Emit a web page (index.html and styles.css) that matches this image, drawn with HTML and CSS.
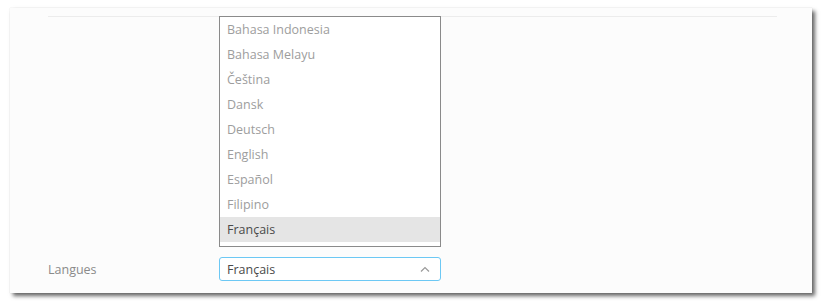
FILE: index.html
```html
<!DOCTYPE html>
<html lang="fr">
<head>
  <meta charset="UTF-8" />
  <title>Langues</title>
  <link rel="stylesheet" href="styles.css">
</head>
<body>

  <div class="card">
    <hr class="rule">

    <div class="row">
      <label class="label">Langues</label>

      <div class="select-wrap">
        <!-- open list, drawn above the field -->
        <ul class="options">
          <li>Bahasa Indonesia</li>
          <li>Bahasa Melayu</li>
          <li>Čeština</li>
          <li>Dansk</li>
          <li>Deutsch</li>
          <li>English</li>
          <li>Español</li>
          <li>Filipino</li>
          <li class="selected">Français</li>
        </ul>

        <div class="select">
          <span>Français</span>
          <svg class="chevron" width="10" height="6" viewBox="0 0 10 6">
            <path d="M1 5.5 L5 1.5 L9 5.5" fill="none" stroke="#9a9a9a" stroke-width="1.2"/>
          </svg>
        </div>
      </div>
    </div>
  </div>

</body>
</html>
```

FILE: styles.css
```css
* { margin: 0; padding: 0; box-sizing: border-box; }

html, body {
  background: #fff;
  font-family: 'Open Sans', sans-serif;
  font-size: 12.5px;
}

body {
  padding: 8px 10px;
}

.card {
  width: 802px;
  height: 285px;
  background: #fcfcfc;
  box-shadow: 0 0 1px rgba(0, 0, 0, 0.15), 3px 3px 4px rgba(0, 0, 0, 0.6);
  padding: 8px 35px 12px 38px;
  display: flex;
  flex-direction: column;
}

.rule {
  border: none;
  border-top: 1px solid #ececec;
}

.row {
  margin-top: auto;
  display: flex;
  align-items: center;
}

.label {
  width: 171px;
  color: #8a8a8a;
}

.select-wrap {
  position: relative;
  width: 222px;
}

.select {
  height: 24px;
  border: 1px solid #6cc8f4;
  border-radius: 3px;
  background: #fff;
  color: #4a4a4a;
  padding: 0 10px 0 7px;
  display: flex;
  align-items: center;
  justify-content: space-between;
}

.options {
  list-style: none;
  position: absolute;
  left: 0;
  right: 0;
  bottom: calc(100% + 10px);
  height: 231px;
  border: 1px solid #8a8a8a;
  background: #fff;
  padding-bottom: 4px;
  overflow: hidden;
  display: flex;
  flex-direction: column;
  justify-content: flex-end;
}

.options li {
  height: 25px;
  line-height: 25px;
  padding-left: 7px;
  color: #9d9d9d;
}

.options li.selected {
  background: #e5e5e5;
  color: #4a4a4a;
}
```
